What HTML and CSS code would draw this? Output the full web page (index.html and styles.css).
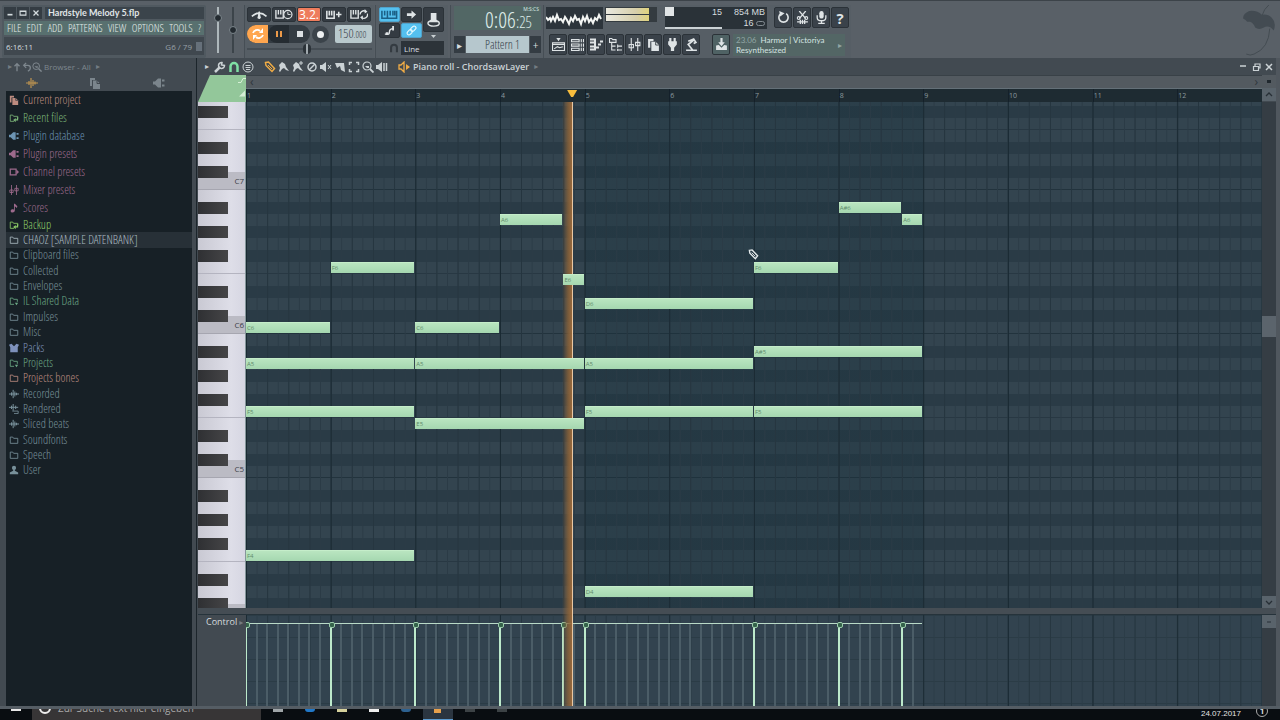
FILE: index.html
```
<!DOCTYPE html>
<html lang="en">
<head>
    <meta charset="UTF-8">
    <meta name="viewport" content="width=device-width, initial-scale=1.0">
    <title>Hardstyle Melody 5.flp</title>
    <link rel="stylesheet" href="styles.css">
</head>
<body>
    <svg class="symbols" aria-hidden="true">
        <symbol id="folder" viewBox="0 0 12 12"><path d="M1.5 10V2.5h3l1 1.5h5v6z" fill="none" stroke="currentColor"/></symbol>
        <symbol id="folder-link" viewBox="0 0 12 12"><path d="M6 10H1.5V2.5h3l1 1.5h5v3" fill="none" stroke="currentColor"/><path d="M11 5v4H8v2L5 8.500l3-2.500v1.500h1.500V5z" fill="currentColor"/></symbol>
        <symbol id="folder-down" viewBox="0 0 12 12"><path d="M6 10H1.5V2.5h3l1 1.500h4.500v3" fill="none" stroke="currentColor"/><path d="M7 8h4l-2 3z" fill="currentColor"/></symbol>
        <symbol id="pages" viewBox="0 0 12 12"><path d="M1 1h5v2H3v6H1z" fill="currentColor"/><path d="M4 3.500h4l3 3V12H4z" fill="currentColor"/><path d="M8 3.500v3h3" fill="none" stroke="#333a40" stroke-width=".8"/></symbol>
        <symbol id="plug" viewBox="0 0 12 12"><path d="M0 4.500h2l3-3h3v9H5l-3-3H0zM9 2.500h2.500v2H9zM9 7.500h2.500v2H9z" fill="currentColor"/></symbol>
        <symbol id="channel" viewBox="0 0 12 12"><path d="M1.500 2.500h7v7h-7z" fill="none" stroke="currentColor" stroke-width="1.500"/><path d="M9 3l3 3-3 3z" fill="currentColor"/></symbol>
        <symbol id="mixer" viewBox="0 0 12 12"><path d="M3 0v12M9 0v12" stroke="currentColor"/><path d="M1 6h4v3H1zM7 4h4v3H7z" fill="none" stroke="currentColor"/></symbol>
        <symbol id="score" viewBox="0 0 12 12"><path d="M6 1h1l3 3-.5 2L7 4v5c0 3-5 3-5 .5C2 8 4 7 6 8z" fill="currentColor"/></symbol>
        <symbol id="pack" viewBox="0 0 12 12"><path d="M0 2l3-1 3 3 3-3 3 1-1.500 3V11h-9V5z" fill="currentColor"/></symbol>
        <symbol id="wave" viewBox="0 0 12 12"><path d="M0 6h12M3 4v4M5 1v10M7 3v6M9 4.500v3" stroke="currentColor" stroke-width="1.200"/></symbol>
        <symbol id="render" viewBox="0 0 12 12"><path d="M0 4h11M3 2v4M5 0v8M8 2v4" stroke="currentColor" stroke-width="1.200"/><path d="M4 8.500h7v3H6" fill="none" stroke="currentColor"/></symbol>
        <symbol id="user" viewBox="0 0 12 12"><circle cx="6" cy="3.500" r="2.500" fill="currentColor"/><path d="M5 5h2v2l4 2v2H1V9l4-2z" fill="currentColor"/></symbol>
        <symbol id="magnet" viewBox="0 0 12 12"><path d="M2.500 11V5.500a3.500 3.500 0 0 1 7 0V11" fill="none" stroke="currentColor" stroke-width="2.500"/></symbol>
        <symbol id="magnifier" viewBox="0 0 12 12"><circle cx="5" cy="5" r="4" fill="none" stroke="currentColor" stroke-width="1.200"/><path d="M8 8l3.500 3.500" stroke="currentColor" stroke-width="1.800"/><path d="M3 5h4v2H5z" fill="currentColor"/></symbol>
        <symbol id="pencil" viewBox="0 0 12 12"><path d="M1.500 1.500l3-.5 6 6.500-2.500 3L2 4.500z" fill="none" stroke="currentColor" stroke-width="1.500"/><path d="M4 4l4 4" stroke="currentColor"/></symbol>
        <symbol id="brush" viewBox="0 0 12 12"><path d="M1 4l3-3 3 2 1 3 3 4-3-1-2-2-2 1-2 3-1-1 1-3z" fill="currentColor"/></symbol>
    </svg>

    <header class="toolbar">
        <section class="project">
            <div class="title-row">
                <button class="win" aria-label="Minimize"><svg viewBox="0 0 12 12"><path d="M3 8h6" stroke="currentColor" stroke-width="2"/></svg></button>
                <button class="win" aria-label="Restore"><svg viewBox="0 0 12 12"><path d="M2.500 3.500h7v5h-7zM2 4h8" fill="none" stroke="currentColor" stroke-width="1.300"/></svg></button>
                <button class="win" aria-label="Close"><svg viewBox="0 0 12 12"><path d="M3 3l6 6M9 3L3 9" stroke="currentColor" stroke-width="1.500"/></svg></button>
                <h1>Hardstyle Melody 5.flp</h1>
            </div>
            <nav class="menu">
                <a href="#">FILE</a><a href="#">EDIT</a><a href="#">ADD</a><a href="#">PATTERNS</a><a href="#">VIEW</a><a href="#">OPTIONS</a><a href="#">TOOLS</a><a href="#">?</a>
            </nav>
            <div class="hint"><span>6:16:11</span><span class="hint-note">G6 / 79</span><i class="hint-key"></i></div>
        </section>

        <section class="faders">
            <input type="range" class="fader volume" aria-label="Main volume" value="82">
            <input type="range" class="fader pitch" aria-label="Main pitch" value="50">
        </section>

        <section class="panel transport">
            <div class="row">
                <button class="tool" aria-label="Metronome"><svg viewBox="0 0 20 12"><path d="M2 8Q10 1 18 8M10 3v8" fill="none" stroke="currentColor" stroke-width="1.800"/><path d="M8 10l2-8 2 8z" fill="currentColor"/></svg></button>
                <button class="tool" aria-label="Wait for input"><svg viewBox="0 0 20 12"><path d="M1 1v9h8V1M3.700 1v5M6.300 1v5" fill="none" stroke="currentColor" stroke-width="1.500"/><circle cx="14" cy="6" r="4.500" fill="#333a40" stroke="currentColor" stroke-width="1.300"/><path d="M14 3v3h3" fill="none" stroke="currentColor"/></svg></button>
                <button class="tool countdown" aria-label="Countdown before recording">3.2.</button>
                <button class="tool" aria-label="Overdub"><svg viewBox="0 0 20 12"><path d="M2 2v8h8V2M4.700 2v5M7.300 2v5M12 6h6M15 3v6" fill="none" stroke="currentColor" stroke-width="1.700"/></svg></button>
                <button class="tool" aria-label="Loop record"><svg viewBox="0 0 20 12"><path d="M1 1v9h8V1M3.700 1v5M6.300 1v5" fill="none" stroke="currentColor" stroke-width="1.500"/><path d="M11 6a4 4 0 0 1 6-3.500M19 5a4 4 0 0 1-6 4.500" fill="none" stroke="currentColor" stroke-width="1.500"/><path d="M16 0l3 3-3 2zM14 12l-3-3 3-2z" fill="currentColor"/></svg></button>
            </div>
            <div class="row play-row">
                <div class="play-pill">
                    <button class="song" aria-label="Pattern or song mode"><svg viewBox="0 0 12 12"><path d="M1 5c1-3 5-4 7-2M11 7c-1 3-5 4-7 2" fill="none" stroke="currentColor" stroke-width="1.800"/><path d="M7 5h4V0zM5 7H1v5z" fill="currentColor"/></svg></button>
                    <button class="pause" aria-label="Pause"><svg viewBox="0 0 12 12"><path d="M4 3v6M8 3v6" stroke="currentColor" stroke-width="2"/></svg></button>
                    <button class="stop" aria-label="Stop"><i></i></button>
                </div>
                <button class="record" aria-label="Record"><i></i></button>
                <output class="tempo">150<small>.000</small></output>
            </div>
            <input type="range" class="position" aria-label="Song position" value="48">
        </section>

        <section class="panel typing">
            <div class="typing-grid">
                <button class="tool on" aria-label="Typing keyboard to piano"><svg viewBox="0 0 18 12"><path d="M1 2v8h16V2M4 2v5M7 2v8M10 2v5M13 2v5M15 2v5" fill="none" stroke="currentColor" stroke-width="1.700"/></svg></button>
                <button class="tool" aria-label="Step editing"><svg viewBox="0 0 12 12"><path d="M1 4.500h5V1.500L11 6l-5 4.500v-3H1z" fill="currentColor"/></svg></button>
                <button class="tool tall" aria-label="Tap"><svg viewBox="0 0 14 18"><path d="M4 2h6v7l2 3H2l2-3z" fill="currentColor"/><ellipse cx="7" cy="13" rx="6" ry="3" fill="none" stroke="currentColor" stroke-width="1.500"/></svg></button>
                <button class="tool" aria-label="Note slide"><svg viewBox="0 0 14 12"><path d="M2 10h4q1 0 1-2t1-3 4-1" fill="none" stroke="currentColor" stroke-width="1.500"/><path d="M10 1h2v5h-2zM3 8h3v3H3z" fill="currentColor"/></svg></button>
                <button class="tool on" aria-label="Link"><svg viewBox="0 0 12 12"><g fill="none" stroke="currentColor" stroke-width="1.200" transform="rotate(-45 6 6)"><rect x="0" y="4" width="6.500" height="4" rx="2"/><rect x="5.500" y="4" width="6.500" height="4" rx="2"/></g></svg></button>
            </div>
            <i class="typing-arrow"></i>
            <div class="snap">
                <svg class="icon"><use href="#magnet"/></svg>
                <select aria-label="Global snap"><option>Line</option></select>
            </div>
        </section>

        <section class="panel clock">
            <div class="time"><span class="time-unit">M:S:CS</span>0:06<small>:25</small></div>
            <div class="pattern">
                <button aria-label="Previous pattern">▸</button>
                <select aria-label="Pattern"><option>Pattern 1</option></select>
                <button aria-label="New pattern">+</button>
            </div>
        </section>

        <section class="panel monitors">
            <div class="row upper">
                <svg class="scope" viewBox="0 0 57 22" preserveAspectRatio="none"><path d="M0 10l2 3 2-2 1 3 2-4 2 4 2-6 2 5 2-1 2 3 2-5 2 3 2 4 2-6 2 3 2-5 2 4 2-1 2 5 2-7 2 4 2-5 2 6 2-3 2 4 2-5 2 2 2-5 2 4" fill="none" stroke="#f4f6f4" stroke-width="2"/></svg>
                <div class="meter"><i></i><i></i></div>
                <div class="cpu">
                    <div class="cpu-graph"><i></i><b>15</b></div>
                    <div class="memory"><b>854 MB</b><b>16 <i></i></b></div>
                </div>
                <div class="row buttons">
                    <button class="tool square" aria-label="Undo"><svg viewBox="0 0 12 12"><path d="M8.500 2.500A4.300 4.300 0 1 1 3.500 2.500" fill="none" stroke="currentColor" stroke-width="1.500"/><path d="M2 0l5 2-4 3z" fill="currentColor"/></svg></button>
                    <button class="tool square" aria-label="Cut audio"><svg viewBox="0 0 12 12"><path d="M3 0l6 7M9 0L3 7M1 10h10M4 8v4M6 8v4M8 8v4" stroke="currentColor" stroke-width="1.200"/><circle cx="2.500" cy="6.500" r="1.300" fill="none" stroke="currentColor"/><circle cx="9.500" cy="6.500" r="1.300" fill="none" stroke="currentColor"/></svg></button>
                    <button class="tool square" aria-label="Record audio"><svg viewBox="0 0 12 12"><rect x="4" y="0" width="4" height="7" rx="2" fill="currentColor"/><path d="M2 4v2q0 3 4 3t4-3V4M6 9v3M3 11.500h6" fill="none" stroke="currentColor" stroke-width="1.200"/></svg></button>
                    <button class="tool square help" aria-label="Help">?</button>
                </div>
            </div>
            <div class="row lower">
                <div class="row buttons">
                    <button class="tool square" aria-label="Playlist"><svg viewBox="0 0 12 12"><path d="M.5 4.500h11v7H.5zM.5 6h11M2 10l3-2 2 1 3-1" fill="none" stroke="currentColor"/><path d="M4 0h4L6 3z" fill="currentColor"/></svg></button>
                    <button class="tool square" aria-label="Step sequencer"><svg viewBox="0 0 12 12"><path d="M.5 1.500h7v2h-7zM.5 5.500h7v2h-7zM.5 9.500h7v2h-7zM9.500 1v3M11.500 1v3M9.500 5v3M11.500 5v3M9.500 9v3M11.500 9v3" fill="none" stroke="currentColor"/></svg></button>
                    <button class="tool square" aria-label="Piano roll"><svg viewBox="0 0 13 12"><path d="M0 1h5v10H0M0 4h4M0 8h4" fill="none" stroke="currentColor" stroke-width="2"/><path d="M6 8h3v2H6zM8 5h3v2H8zM10 2h3v2h-3z" fill="currentColor"/></svg></button>
                    <button class="tool square" aria-label="Browser"><svg viewBox="0 0 12 12"><path d="M.5 4V.5h2l1 1h3V4zM2.500 4v7H6M2.500 7.500H6M8 6v3M8 10v2M8 7.500h4M8 11h4" fill="none" stroke="currentColor"/></svg></button>
                    <button class="tool square" aria-label="Mixer"><svg viewBox="0 0 12 12"><use href="#mixer"/></svg></button>
                    <button class="tool square" aria-label="Project files"><svg viewBox="0 0 12 12"><use href="#pages"/></svg></button>
                    <button class="tool square" aria-label="Plugin picker"><svg viewBox="0 0 12 12"><path d="M3 0h2v3h2V0h2v3h1v3L7.500 9v3h-3V9L2 6V3h1z" fill="currentColor"/></svg></button>
                    <button class="tool square" aria-label="Tools"><svg viewBox="0 0 12 12"><path d="M3 3l5-2 2 3-2 1M8 2L3 6l4 5M1 11.500h10" fill="none" stroke="currentColor" stroke-width="1.600"/></svg></button>
                </div>
                <button class="tool square save" aria-label="Save"><svg viewBox="0 0 12 12"><path d="M5 0h2v4h2L6 7.500 3 4h2z" fill="currentColor"/><path d="M1 7v4h10V7L8.500 6.500 6 9 3.500 6.500z" fill="currentColor"/></svg></button>
                <a class="news" href="#"><span><time>23.06</time>&nbsp; Harmor | Victoriya<br>Resynthesized</span><i>▸</i></a>
            </div>
        </section>

        <svg class="fruit" viewBox="0 0 34 54"><path d="M1 14Q0 9 7 6q8-1 13 4 6-1 10 3 5 5 2 13l-3-3q-4-2-7 0-5 3-9 0-1-4-5-6H5l-2-2z" fill="#434b52"/><path d="M27 0Q22 4 20 11M28 24Q27 44 12 50Q8 52 4 50" fill="none" stroke="#434b52"/></svg>
    </header>

    <main class="workspace">
        <aside class="browser">
            <div class="browser-head">
                <span class="arrow">▸</span>
                <svg class="icon" viewBox="0 0 12 12"><path d="M6 11V2M3 5l3-3 3 3" fill="none" stroke="currentColor" stroke-width="1.600"/></svg>
                <svg class="icon" viewBox="0 0 12 12"><path d="M5 1L2 4l3 3M2 4h5q3 0 3 3t-3 4" fill="none" stroke="currentColor" stroke-width="1.500"/></svg>
                <svg class="icon"><use href="#magnifier"/></svg>
                <span>Browser - All</span><span class="arrow">▸</span>
            </div>
            <div class="browser-tabs">
                <button class="active" aria-label="All"><svg class="icon"><use href="#wave"/></svg></button>
                <button aria-label="Files"><svg class="icon"><use href="#pages"/></svg></button>
                <button aria-label="Plugins"><svg class="icon"><use href="#plug"/></svg></button>
            </div>
            <nav class="tree">
                <ul class="sections" id="sections"></ul>
                <ul class="folders" id="folders"></ul>
            </nav>
        </aside>

        <section class="piano-roll">
            <div class="roll-title">
                <span class="arrow light">▸</span>
                <svg class="icon" viewBox="0 0 12 12"><path d="M1 11l5-5" stroke="currentColor" stroke-width="2.500"/><path d="M10.500 4.500A3 3 0 1 1 8 1.500L7.500 4z" fill="none" stroke="currentColor" stroke-width="1.500"/></svg>
                <svg class="icon green"><use href="#magnet"/></svg>
                <svg class="icon" viewBox="0 0 12 12"><circle cx="6" cy="6" r="5" fill="none" stroke="currentColor"/><path d="M3.500 4.500h5M3.500 6.500h5M4 8.500h4" stroke="currentColor"/></svg>
                <div class="roll-tools">
                    <svg class="icon orange"><use href="#pencil"/></svg>
                    <svg class="icon"><use href="#brush"/></svg>
                    <svg class="icon" viewBox="0 0 12 12"><use href="#brush"/><path d="M9 0v4M7 2h4" stroke="currentColor"/></svg>
                    <svg class="icon" viewBox="0 0 12 12"><circle cx="6" cy="6" r="4" fill="none" stroke="currentColor" stroke-width="1.500"/><path d="M9 3L3 9" stroke="currentColor" stroke-width="1.500"/></svg>
                    <svg class="icon" viewBox="0 0 12 12"><path d="M0 4h2l4-3v10L2 8H0z" fill="currentColor"/><path d="M8 4l3 4M11 4L8 8" stroke="currentColor"/></svg>
                    <svg class="icon" viewBox="0 0 12 12"><path d="M1 2h9l1 9-4-2-1-4-3 2z" fill="currentColor"/></svg>
                    <svg class="icon" viewBox="0 0 12 12"><path d="M1.500 4V1.500H4M8 1.500h2.500V4M10.500 8v2.500H8M4 10.500H1.500V8" fill="none" stroke="currentColor" stroke-width="1.500"/></svg>
                    <svg class="icon"><use href="#magnifier"/></svg>
                    <svg class="icon" viewBox="0 0 12 12"><path d="M0 4h2l4-3v10L2 8H0z" fill="currentColor"/><path d="M8 2v8M10.500 2v8" stroke="currentColor" stroke-width="1.500"/></svg>
                </div>
                <svg class="icon orange" viewBox="0 0 12 12"><path d="M1 4h2l3-3v10L3 8H1z" fill="none" stroke="currentColor" stroke-width="1.300"/><path d="M8 3l4 3-4 3z" fill="currentColor"/></svg>
                <h2>Piano roll - ChordsawLayer</h2><span class="arrow">▸</span>
                <div class="roll-window">
                    <button aria-label="Minimize"><svg viewBox="0 0 12 12"><path d="M3 5h6" stroke="currentColor" stroke-width="1.500"/></svg></button>
                    <button aria-label="Restore"><svg viewBox="0 0 12 12"><path d="M3.500 5.500h5v4h-5zM5 5V3h5v4H9" fill="none" stroke="currentColor" stroke-width="1.200"/></svg></button>
                    <button aria-label="Close"><svg viewBox="0 0 12 12"><path d="M3 3l6 6M9 3L3 9" stroke="currentColor" stroke-width="1.500"/></svg></button>
                </div>
            </div>

            <div class="roll-body">
                <div class="corner"><svg viewBox="0 0 8 22"><path d="M0 6h3l2-4h3" fill="none" stroke="#d5efd5"/><path d="M1 20h6v-6z" fill="#d5efd5"/></svg></div>
                <div class="h-scroll"><span>‹</span><span>›</span></div>
                <div class="scroll-dot"></div>
                <ol class="ruler" id="ruler"></ol>
                <button class="scroll-end" aria-label="Scroll up"><svg viewBox="0 0 12 12"><path d="M3 7l3-3 3 3" fill="none" stroke="currentColor" stroke-width="1.300"/></svg></button>
                <div class="keyboard" id="keyboard"></div>
                <div class="grid">
                    <div class="notes" id="notes"></div>
                    <svg class="cursor"><use href="#pencil"/></svg>
                </div>
                <div class="v-scroll long"><i></i><button class="scroll-end" aria-label="Scroll down"><svg viewBox="0 0 12 12"><path d="M3 5l3 3 3-3" fill="none" stroke="currentColor" stroke-width="1.300"/></svg></button></div>
                <div class="divider"></div>
                <div class="control-label">Control <span class="arrow">▸</span></div>
                <div class="control">
                    <div class="velocities" id="velocities"></div>
                </div>
                <div class="v-scroll"><button class="scroll-end" aria-label="Zoom"><svg viewBox="0 0 12 12"><path d="M4 6h4" stroke="currentColor"/></svg></button></div>
                <div class="playhead-track"><div class="playhead"></div></div>
            </div>
        </section>
    </main>

    <footer class="taskbar">
        <div class="start"></div>
        <div class="search"><i></i>Zur Suche Text hier eingeben</div>
        <div class="apps"><i></i><i class="blue"></i><i class="yellow"></i><i class="white"></i><i class="navy"></i><i class="fl"></i><i class="dim"></i><i class="dim"></i></div>
        <time>24.07.2017</time>
        <b class="badge">1</b>
    </footer>

    <script>
        // Browser tree: icon, colour class, label
        const sections = [
            ["pages", "salmon", "Current project"],
            ["folder-link", "lime", "Recent files"],
            ["plug", "blue", "Plugin database"],
            ["plug", "pink", "Plugin presets"],
            ["channel", "pink", "Channel presets"],
            ["mixer", "pink", "Mixer presets"],
            ["score", "pink", "Scores"]
        ];
        const folders = [
            ["folder-link", "bright", "Backup"],
            ["folder", "selected", "CHAOZ [SAMPLE DATENBANK]"],
            ["folder", "", "Clipboard files"],
            ["folder", "", "Collected"],
            ["folder", "", "Envelopes"],
            ["folder-down", "green", "IL Shared Data"],
            ["folder", "", "Impulses"],
            ["folder", "", "Misc"],
            ["pack", "lilac", "Packs"],
            ["folder-down", "green", "Projects"],
            ["folder", "salmon", "Projects bones"],
            ["wave", "", "Recorded"],
            ["render", "", "Rendered"],
            ["wave", "", "Sliced beats"],
            ["folder", "", "Soundfonts"],
            ["folder", "", "Speech"],
            ["user", "", "User"]
        ];

        function fillTree(id, items) {
            document.getElementById(id).innerHTML = items.map(([icon, tone, label]) =>
                `<li><a href="#" class="${tone}"><svg class="icon"><use href="#${icon}"/></svg>${label}</a></li>`
            ).join("");
        }
        fillTree("sections", sections);
        fillTree("folders", folders);

        // Bar numbers
        for (let bar = 1; bar <= 12; bar++) {
            const li = document.createElement("li");
            li.textContent = bar;
            document.getElementById("ruler").appendChild(li);
        }

        // Keys from G7 down to C#4
        const names = ["C", "C#", "D", "D#", "E", "F", "F#", "G", "G#", "A", "A#", "B"];
        const topKey = 7 * 12 + 7;
        for (let key = topKey; key >= 4 * 12 + 1; key--) {
            const name = names[key % 12];
            const div = document.createElement("div");
            div.className = "key " + name.replace("#", "s");
            if (name.includes("#")) div.innerHTML = "<i></i>";
            if (name === "C") div.textContent = "C" + Math.floor(key / 12);
            document.getElementById("keyboard").appendChild(div);
        }

        // Notes: name, octave, start and end in eighths of a bar
        const notes = [
            ["C", 6, 0, 8], ["A", 5, 0, 16], ["F", 5, 0, 16], ["F", 4, 0, 16],
            ["F", 6, 8, 16], ["C", 6, 16, 24], ["A", 5, 16, 32], ["E", 5, 16, 32],
            ["A", 6, 24, 30], ["E", 6, 30, 32],
            ["D", 6, 32, 48], ["A", 5, 32, 48], ["F", 5, 32, 48], ["D", 4, 32, 48],
            ["F", 6, 48, 56], ["A#", 5, 48, 64], ["F", 5, 48, 64],
            ["A#", 6, 56, 62], ["A", 6, 62, 64]
        ];
        document.getElementById("notes").innerHTML = notes.map(([name, octave, start, end]) => {
            const row = topKey - (octave * 12 + names.indexOf(name)) + 1;
            return `<div class="note" style="grid-area: ${row} / ${start + 1} / ${row + 1} / ${end + 1}">${name}${octave}</div>`;
        }).join("");

        // One stem per eighth, brighter where a note starts
        const starts = new Set(notes.map(note => note[2]));
        for (let step = 0; step < 64; step++) {
            const stem = document.createElement("i");
            if (starts.has(step)) stem.className = "hit";
            document.getElementById("velocities").appendChild(stem);
        }
    </script>
</body>
</html>
```
FILE: styles.css
```
:root {
    --narrow: "Open Sans Condensed Light", "Liberation Sans Narrow", "Liberation Sans", sans-serif;
}
* {
    box-sizing: border-box;
}
body {
    margin: 0;
    height: 100vh;
    display: flex;
    flex-direction: column;
    overflow: hidden;
    background: #596067;
    color: #d5dcdf;
    font-family: "Open Sans", "Noto Sans", sans-serif;
    font-size: 11px;
}
button, select, input {
    font: inherit;
    color: inherit;
    margin: 0;
    padding: 0;
    border: 0;
    background: none;
}
button {
    display: flex;
    align-items: center;
    justify-content: center;
}
a {
    color: inherit;
    text-decoration: none;
}
ul, ol {
    list-style: none;
    margin: 0;
    padding: 0;
}
h1, h2 {
    margin: 0;
}
select {
    appearance: none;
}
.symbols {
    display: none;
}
.icon {
    width: 12px;
    height: 12px;
    flex: none;
}
.arrow {
    font: 8px "DejaVu Sans", sans-serif;
    color: #737c83;
}
.arrow.light {
    color: #cbd2d5;
    margin-right: 3px;
}
.green {
    color: #7fe0a4;
}
.orange {
    color: #f0ac45;
}

/* Toolbar */
.toolbar {
    display: flex;
    height: 58px;
    padding: 4px 4px 0 2px;
    border-top: 1px solid #3c4349;
    flex: none;
}
.project {
    width: 204px;
    padding: 2px;
    background: #505960;
    border-radius: 2px;
    display: flex;
    flex-direction: column;
    gap: 2px;
}
.title-row {
    display: flex;
    gap: 1px;
    height: 12px;
}
.win {
    width: 12px;
    background: #343c43;
}
.win svg {
    width: 10px;
}
.title-row h1 {
    flex: 1;
    margin-left: 2px;
    padding-left: 3px;
    background: #3b444b;
    font: bold 9px/12px Lato, sans-serif;
    color: #e0e5e7;
}
.menu {
    display: flex;
    justify-content: space-between;
    padding: 0 3px;
    background: #58706f;
    font: 11px/14px var(--narrow);
    color: #e2ebe8;
}
.hint {
    display: flex;
    align-items: center;
    gap: 4px;
    height: 18px;
    padding: 0 2px;
    background: #40484f;
    font-size: 8px;
}
.hint-note {
    margin-left: auto;
    color: #98a1a7;
}
.hint-key {
    width: 6px;
    height: 9px;
    background: #66707a;
}
.faders {
    display: flex;
    justify-content: space-around;
    width: 38px;
    padding: 2px 4px;
}
.fader {
    appearance: none;
    writing-mode: vertical-lr;
    direction: rtl;
    width: 10px;
    height: 46px;
    background: linear-gradient(90deg, transparent 4px, #aeb7bb 4px, #aeb7bb 6px, transparent 6px);
}
.pitch {
    background: linear-gradient(90deg, transparent 4px, #3c444a 4px, #3c444a 6px, transparent 6px);
}
.fader::-webkit-slider-thumb {
    appearance: none;
    width: 8px;
    height: 8px;
    border: 1px solid #7c868c;
    border-radius: 4px;
    background: #232a30;
}
.panel {
    border-left: 1px solid #464e55;
    background: #565e65;
}
.row {
    display: flex;
}
.tool {
    background: #343b42;
    border: 1px solid #2b3238;
    border-radius: 2px;
    color: #dfe4e6;
    height: 15px;
}
.tool svg {
    height: 11px;
}
.square {
    width: 18px;
    height: 21px;
    background: #3a424a;
}
.square svg {
    width: 13px;
    height: 13px;
}
.transport {
    width: 130px;
    padding: 2px 2px 0;
}
.transport .tool {
    width: 24px;
    margin-right: 1px;
}
.transport .countdown {
    background: #ee7c5c;
    color: #fff;
    font: 12px "Open Sans", sans-serif;
}
.play-row {
    align-items: center;
    height: 18px;
    margin-top: 3px;
}
.play-pill {
    display: flex;
    height: 18px;
    border-radius: 9px;
    overflow: hidden;
    background: #343c43;
}
.play-pill button {
    width: 21px;
}
.play-pill svg {
    width: 12px;
    height: 12px;
}
.play-pill .song {
    background: #ffa64f;
    color: #fff;
}
.play-pill .pause {
    background: #252c32;
    border-radius: 9px 0 0 9px;
    color: #ec9a49;
}
.stop i {
    width: 6px;
    height: 6px;
    background: #dce1e4;
}
.record {
    width: 17px;
    height: 17px;
    margin-left: 2px;
    border-radius: 9px;
    background: #3b434a;
}
.record i {
    width: 7px;
    height: 7px;
    border-radius: 4px;
    background: #eef1f2;
}
.tempo {
    flex: 1;
    margin-left: 6px;
    border-radius: 2px;
    background: #b9c9cd;
    color: #39444c;
    padding-left: 3px;
    font: 13px/16px var(--narrow);
}
.tempo small {
    font-size: 9px;
}
.position {
    appearance: none;
    display: block;
    width: 100%;
    height: 12px;
    background: linear-gradient(transparent 5px, #454d54 5px, #454d54 7px, transparent 7px);
}
.position::-webkit-slider-thumb {
    appearance: none;
    width: 8px;
    height: 10px;
    border-radius: 4px;
    background: linear-gradient(90deg, #2b3238 3px, #a0a8ad 3px, #a0a8ad 5px, #2b3238 5px);
}
.typing {
    width: 73px;
    margin-left: 1px;
    padding: 2px 4px 0 3px;
}
.typing-grid {
    display: grid;
    grid-template: 15px 15px / repeat(3, 1fr);
    gap: 1px;
}
.typing .tall {
    grid-area: 1 / 3 / 3 / 4;
    height: 25px;
}
.typing .tall svg {
    height: 17px;
}
.typing .on {
    background: #54c0ef;
    border-color: #4fa3cc;
    color: #e8fbff;
}
.typing .on:first-child {
    color: #1b5f86;
}
.typing-arrow {
    display: block;
    width: 5px;
    height: 3px;
    margin: -3px 8px 0 auto;
    background: #c9d0d3;
    clip-path: polygon(0 0, 100% 0, 50% 100%);
}
.snap {
    display: flex;
    align-items: center;
    justify-content: flex-end;
    gap: 2px;
    margin-top: 3px;
    color: #343b41;
}
.snap .icon {
    width: 10px;
}
.snap select {
    width: 43px;
    height: 14px;
    padding-left: 3px;
    background: #2c3339;
    color: #d8dfe2;
    font-size: 8px;
}
.clock {
    width: 93px;
    margin-left: 2px;
    padding: 1px 2px 0 3px;
}
.time {
    position: relative;
    height: 24px;
    padding-right: 9px;
    background: #526765;
    color: #dcebe8;
    text-align: right;
    font: 22px/26px var(--narrow);
}
.time small {
    font-size: 16px;
}
.time-unit {
    position: absolute;
    top: 0;
    right: 2px;
    font: 5px/7px "Open Sans", sans-serif;
}
.pattern {
    display: flex;
    gap: 1px;
    height: 17px;
    margin-top: 6px;
}
.pattern button {
    width: 11px;
    background: #343c43;
    font-size: 10px;
}
.pattern select {
    flex: 1;
    min-width: 0;
    padding-left: 19px;
    background: #b6c7cd;
    color: #36424a;
    font: 12px var(--narrow);
}
.monitors {
    padding: 2px;
}
.upper {
    height: 23px;
}
.scope {
    width: 57px;
    height: 22px;
    background: #2c343b;
}
.meter {
    width: 52px;
    height: 15px;
    margin-left: 2px;
    padding: 1px;
    display: grid;
    gap: 1px;
    background: #343b40;
}
.meter i {
    width: 43px;
    background: linear-gradient(90deg, #e9e8df, #d7cfaa 70%, #e0d37c);
}
.cpu {
    display: flex;
    width: 102px;
    height: 22px;
    margin-left: 8px;
    background: #2a3238;
    font: 9px/11px "Liberation Sans Narrow", "Liberation Sans", sans-serif;
}
.cpu b {
    font-weight: normal;
}
.cpu-graph {
    display: flex;
    justify-content: space-between;
    width: 57px;
    border-bottom: 2px solid #cbd2d5;
}
.cpu-graph i {
    width: 9px;
    height: 9px;
    background: #e1e5e6;
}
.memory {
    flex: 1;
    display: flex;
    flex-direction: column;
    align-items: flex-end;
    padding-right: 2px;
}
.memory i {
    display: inline-block;
    width: 9px;
    height: 5px;
    border: 1px solid #838c92;
    border-radius: 5px;
}
.buttons {
    gap: 1px;
}
.upper .buttons {
    margin-left: 7px;
}
.help {
    font-size: 15px;
    font-weight: bold;
}
.lower {
    height: 22px;
    margin: 4px 0 0 3px;
}
.save {
    margin-left: 12px;
    background: #4f6264;
}
.news {
    display: flex;
    align-items: center;
    justify-content: space-between;
    width: 112px;
    margin-left: 3px;
    padding: 0 3px;
    background: #536665;
    color: #d5e4e2;
    font: 8px/10px Lato, sans-serif;
}
.news time, .news i {
    color: #91a5a4;
    font-style: normal;
}
.fruit {
    width: 34px;
    height: 53px;
    margin-left: auto;
}

/* Browser */
.workspace {
    flex: 1;
    min-height: 0;
    display: flex;
    padding-right: 4px;
    border-bottom: 3px solid #555d64;
    background: #50575e;
}
.browser {
    width: 197px;
    flex: none;
    display: flex;
    flex-direction: column;
    padding: 0 4px 0 6px;
    background: #424a51;
    border-right: 1px solid #1c252b;
}
.browser-head {
    display: flex;
    align-items: center;
    height: 17px;
    margin-left: 2px;
    font-size: 8px;
    color: #7e878e;
}
.browser-head .icon {
    width: 10px;
    height: 10px;
}
.browser-head span {
    margin: 0 3px 0 2px;
}
.browser-head .arrow:first-child {
    margin: 0;
}
.browser-tabs {
    display: grid;
    grid-template-columns: repeat(3, 1fr);
    height: 16px;
    margin: 0 1px 0 -6px;
    color: #7b858c;
}
.browser-tabs .active {
    color: #be9450;
}
.tree {
    flex: 1;
    min-height: 0;
    background: #172026;
    font: 12px/14px var(--narrow);
    color: #78909a;
}
.tree ul {
    display: flex;
    flex-direction: column;
}
.tree li {
    flex: 1;
    display: flex;
    min-height: 0;
}
.tree a {
    flex: 1;
    display: flex;
    align-items: center;
    gap: 4px;
    padding-left: 3px;
}
.tree .icon {
    width: 10px;
    height: 10px;
}
.sections {
    height: 126px;
}
.folders {
    height: 261px;
}
.salmon {
    color: #bd8c80;
}
.lime {
    color: #7cb678;
}
.bright {
    color: #8ccb66;
}
.blue {
    color: #6c94b4;
}
.pink {
    color: #9d6a8c;
}
.tree .green {
    color: #6ca986;
}
.lilac {
    color: #7e91bb;
}
.selected {
    background: #273037;
    color: #a9b9c0;
}

/* Piano roll */
.piano-roll {
    flex: 1;
    min-width: 0;
    display: flex;
    flex-direction: column;
    padding-left: 1px;
    background: #424a51;
}
.roll-title {
    display: flex;
    align-items: center;
    height: 17px;
    padding: 0 1px 0 7px;
    gap: 2px;
    color: #cbd2d5;
}
.roll-title h2 {
    font: bold 9px "Open Sans", sans-serif;
    font-weight: 600;
    margin: 0 3px 0 1px;
}
.roll-tools {
    display: flex;
    gap: 2px;
    margin: 0 8px;
}
.roll-window {
    display: flex;
    margin-left: auto;
}
.roll-window button {
    width: 13px;
}
.roll-window svg {
    width: 12px;
}
.roll-body {
    position: relative;
    flex: 1;
    min-height: 0;
    display: grid;
    grid-template: 13px 14px minmax(0, 1fr) 7px 91px / 48px 1fr 14px;
}
.corner {
    grid-row: 1 / 3;
    display: flex;
    justify-content: flex-end;
    background: #93c79a;
    clip-path: polygon(12px 0, 100% 0, 100% 100%, 0 100%);
}
.corner svg {
    width: 8px;
    height: 25px;
}
.h-scroll {
    display: flex;
    justify-content: space-between;
    align-items: center;
    padding: 0 4px;
    background: #535a60;
    border-top: 1px solid #394147;
    color: #2f373d;
    font-size: 12px;
    line-height: 10px;
}
.scroll-dot {
    background: radial-gradient(#20282e 2px, #535a60 2px);
}
.ruler {
    display: grid;
    grid-template-columns: repeat(12, 1fr);
    background: #1e2b32;
    border-top: 1px solid #647078;
    color: #8c999f;
    font: 7px/13px "Open Sans", sans-serif;
}
.ruler li {
    border-left: 1px solid #14202a;
}
.scroll-end {
    width: 100%;
    height: 13px;
    background: #59636b;
    color: #272f36;
}
.scroll-end svg {
    width: 12px;
    height: 12px;
}
.keyboard {
    display: flex;
    flex-direction: column;
    overflow: hidden;
    background: linear-gradient(90deg, #c9c9d3, #dedee8 70%, #d6d6e2);
    border-right: 1px solid #84969a;
}
.key {
    height: 12px;
    flex: none;
    font-size: 8px;
    line-height: 6px;
    text-align: right;
    padding-right: 1px;
    color: #3b4047;
}
.key:first-child {
    height: 4px;
}
.key i {
    display: block;
    width: 30px;
    height: 12px;
    background: linear-gradient(90deg, #2f3033, #454547);
}
.key.C {
    background: #bbbbc4;
    border-bottom: 1px solid #a6a6b0;
}
.key.Cs {
    background: linear-gradient(transparent 6px, #bbbbc4 6px);
}
.key.F {
    border-bottom: 1px solid #b4b4c0;
}
.grid {
    position: relative;
    overflow: hidden;
    background:
        linear-gradient(90deg, #1a2a33 1px, transparent 1px) 0 0 / calc(100% / 12) 100%,
        linear-gradient(90deg, #25353f 1px, transparent 1px) 0 0 / calc(100% / 48) 100%,
        linear-gradient(90deg, #2b3b46 1px, transparent 1px) 0 0 / calc(100% / 96) 100%,
        linear-gradient(90deg, transparent 33.33%, #16313c44 33.33%, #16313c44 66.67%, transparent 66.67%),
        linear-gradient(#33444f 12px, #2a3b46 12px, #2a3b46 24px, #33444f 24px, #33444f 36px, #2a3b46 36px, #2a3b46 48px, #33444f 48px, #33444f 60px, #2a3b46 60px, #2a3b46 72px, #33444f 72px, #33444f 83px, #283843 83px, #283843 84px, #33444f 84px, #33444f 96px, #2a3b46 96px, #2a3b46 108px, #33444f 108px, #33444f 120px, #2a3b46 120px, #2a3b46 132px, #33444f 132px, #33444f 143px, #22333d 143px) 0 88px / 100% 144px;
}
.notes {
    display: grid;
    grid-template-columns: repeat(96, minmax(0, 1fr));
    grid-template-rows: 4px repeat(42, 12px);
}
.note {
    position: relative;
    z-index: 2;
    margin: 0 1px 1px 0;
    padding-left: 1px;
    overflow: hidden;
    white-space: nowrap;
    background: linear-gradient(#b9e5c0, #a5d7b0);
    border-top: 1px solid #c5edca;
    color: #5f8a6b;
    font: 6px/10px "Open Sans", sans-serif;
}
.cursor {
    position: absolute;
    top: 29%;
    left: 49.4%;
    width: 11px;
    height: 11px;
    color: #e4eaec;
}
.v-scroll {
    background: #353d44;
}
.v-scroll.long {
    display: grid;
    grid-template-rows: 214fr 21px 259fr 12px;
}
.v-scroll i {
    grid-row: 2;
    background: #5b646c;
}
.v-scroll i + .scroll-end {
    grid-row: 4;
    height: 12px;
}
.divider {
    grid-column: 1 / 4;
    background: #454d54;
    border-bottom: 1px solid #26333b;
}
.control-label {
    padding: 0 3px 0 8px;
    font: 9px/14px "Open Sans", sans-serif;
    display: flex;
    gap: 2px;
    align-items: center;
    align-self: start;
}
.control {
    background:
        linear-gradient(90deg, #1b2b34 1px, transparent 1px) 0 0 / calc(100% / 12) 100%,
        linear-gradient(90deg, #263640 1px, transparent 1px) 0 0 / calc(100% / 48) 100%,
        linear-gradient(90deg, #2c3d48 1px, transparent 1px) 0 0 / calc(100% / 96) 100%,
        linear-gradient(#2b3c46 1px, transparent 1px) 0 0 / 100% 22px,
        #32434f;
    padding-top: 8px;
    overflow: hidden;
}
.velocities {
    display: grid;
    grid-template-columns: repeat(64, minmax(0, 1fr));
    width: calc(100% * 8 / 12);
    height: 100%;
    margin-left: -1px;
    border-top: 1px solid #b9dac7;
}
.velocities i {
    position: relative;
    border-left: 2px solid #4b5d67;
}
.velocities .hit {
    border-color: #bce9cb;
}
.velocities .hit::before {
    content: "";
    position: absolute;
    top: -2px;
    left: -3px;
    width: 4px;
    height: 4px;
    border: 1px solid #9ccdac;
    border-radius: 2px;
    background: #35634b;
}
/* Spans ruler, grid and control lane over the notes' columns */
.playhead-track {
    position: absolute;
    inset: 15px 14px 0 48px;
    pointer-events: none;
}
.playhead {
    position: absolute;
    left: 32.1%;
    top: 0;
    bottom: 0;
}
.playhead::before {
    content: "";
    position: absolute;
    top: 12px;
    bottom: 0;
    right: -1px;
    width: 10px;
    background: linear-gradient(90deg, transparent, #8a6238cc 60%, #98693c);
    border-right: 1px solid #e9c8a4;
}
.playhead::after {
    content: "";
    position: absolute;
    top: 0;
    left: -5px;
    width: 10px;
    height: 7px;
    background: #f7bd3d;
    clip-path: polygon(0 0, 100% 0, 60% 100%, 40% 100%);
}

/* Desktop taskbar, mostly covered by the window */
.taskbar {
    display: flex;
    height: 11px;
    flex: none;
    overflow: hidden;
    background: #090d11;
}
.start {
    width: 32px;
    padding-left: 11px;
}
.start::before {
    content: "";
    display: block;
    width: 10px;
    height: 2px;
    background: #e8e8e8;
}
.search {
    display: flex;
    align-items: flex-end;
    gap: 7px;
    width: 229px;
    padding: 0 0 6px 7px;
    background: #373536;
    color: #a9a9a9;
    font: 10px/12px "Open Sans", sans-serif;
}
.search i {
    width: 12px;
    height: 12px;
    border: 2px solid #eee;
    border-radius: 6px;
}
.apps {
    display: flex;
    gap: 22px;
    padding-left: 12px;
}
.apps i {
    width: 10px;
    height: 3px;
    background: #9fa5a8;
}
.apps .blue, .apps .navy {
    background: #2178c8;
    border-radius: 0 0 5px 5px;
}
.apps .yellow {
    background: #d5d09c;
}
.apps .white {
    background: #eee;
}
.apps .navy {
    background: #2d6190;
}
.apps .fl {
    width: 30px;
    height: 11px;
    margin: 0 -10px;
    background: linear-gradient(90deg, transparent 11px, #e6a04c 11px, #e6a04c 18px, transparent 18px) 0 0 / 100% 4px no-repeat, #2b3540;
    border-bottom: 1px solid #5c9bd0;
}
.apps .dim {
    background: #3c4245;
}
.taskbar time {
    margin-left: auto;
    color: #e4e4e4;
    font: 8px/9px "Liberation Sans", sans-serif;
}
.badge {
    width: 12px;
    height: 12px;
    margin: -4px 12px 0 15px;
    border: 1px solid #aaa;
    border-radius: 6px;
    font-size: 8px;
    line-height: 10px;
    text-align: center;
}
```
